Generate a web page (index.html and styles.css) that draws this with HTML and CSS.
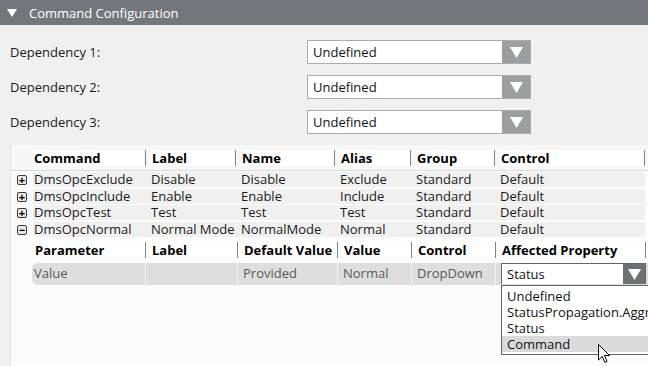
FILE: index.html
```html
<!DOCTYPE html>
<html lang="en">

<head>
    <meta charset="UTF-8">
    <title>Command Configuration</title>
    <link rel="stylesheet" href="styles.css">
</head>

<body>

    <!-- Section header -->
    <div class="section-bar">
        <svg class="collapse-icon" width="10" height="8" viewBox="0 0 10 8"><polygon points="0,0 10,0 5,8" fill="#fff"/></svg>
        <span>Command Configuration</span>
    </div>

    <div class="section-body">

        <!-- Dependencies -->
        <div class="dep-row">
            <label>Dependency 1:</label>
            <div class="select">
                <span class="select-value">Undefined</span>
                <span class="select-btn"><svg width="13" height="11" viewBox="0 0 13 11"><polygon points="0,0 13,0 6.5,11" fill="#fff"/></svg></span>
            </div>
        </div>
        <div class="dep-row">
            <label>Dependency 2:</label>
            <div class="select">
                <span class="select-value">Undefined</span>
                <span class="select-btn"><svg width="13" height="11" viewBox="0 0 13 11"><polygon points="0,0 13,0 6.5,11" fill="#fff"/></svg></span>
            </div>
        </div>
        <div class="dep-row">
            <label>Dependency 3:</label>
            <div class="select">
                <span class="select-value">Undefined</span>
                <span class="select-btn"><svg width="13" height="11" viewBox="0 0 13 11"><polygon points="0,0 13,0 6.5,11" fill="#fff"/></svg></span>
            </div>
        </div>

        <!-- Commands grid -->
        <div class="grid">
            <div class="grid-head">
                <div class="hcell blank"></div>
                <div class="hcell first"><span>Command</span></div>
                <div class="hcell"><span>Label</span></div>
                <div class="hcell"><span>Name</span></div>
                <div class="hcell"><span>Alias</span></div>
                <div class="hcell"><span>Group</span></div>
                <div class="hcell"><span>Control</span></div>
            </div>

            <div class="grid-row">
                <div class="expander"><span class="toggle">+</span></div>
                <div class="cell first">DmsOpcExclude</div>
                <div class="cell">Disable</div>
                <div class="cell">Disable</div>
                <div class="cell">Exclude</div>
                <div class="cell">Standard</div>
                <div class="cell">Default</div>
            </div>
            <div class="grid-row">
                <div class="expander"><span class="toggle">+</span></div>
                <div class="cell first">DmsOpcInclude</div>
                <div class="cell">Enable</div>
                <div class="cell">Enable</div>
                <div class="cell">Include</div>
                <div class="cell">Standard</div>
                <div class="cell">Default</div>
            </div>
            <div class="grid-row">
                <div class="expander"><span class="toggle">+</span></div>
                <div class="cell first">DmsOpcTest</div>
                <div class="cell">Test</div>
                <div class="cell">Test</div>
                <div class="cell">Test</div>
                <div class="cell">Standard</div>
                <div class="cell">Default</div>
            </div>
            <div class="grid-row">
                <div class="expander"><span class="toggle">&minus;</span></div>
                <div class="cell first">DmsOpcNormal</div>
                <div class="cell">Normal Mode</div>
                <div class="cell">NormalMode</div>
                <div class="cell">Normal</div>
                <div class="cell">Standard</div>
                <div class="cell">Default</div>
            </div>

            <!-- Parameters of DmsOpcNormal -->
            <div class="sub">
                <div class="sub-head">
                    <div class="hcell first"><span>Parameter</span></div>
                    <div class="hcell"><span>Label</span></div>
                    <div class="hcell"><span>Default Value</span></div>
                    <div class="hcell"><span>Value</span></div>
                    <div class="hcell"><span>Control</span></div>
                    <div class="hcell"><span>Affected Property</span></div>
                </div>
                <div class="sub-row">
                    <div class="pcell first">Value</div>
                    <div class="pcell"></div>
                    <div class="pcell">Provided</div>
                    <div class="pcell">Normal</div>
                    <div class="pcell">DropDown</div>
                    <div class="pcell drop-cell">
                        <div class="select dark">
                            <span class="select-value">Status</span>
                            <span class="select-btn"><svg width="13" height="11" viewBox="0 0 13 11"><polygon points="0,0 13,0 6.5,11" fill="#fff"/></svg></span>
                            <ul class="drop-list">
                                <li>Undefined</li>
                                <li>StatusPropagation.Aggregation</li>
                                <li>Status</li>
                                <li class="hover">Command</li>
                            </ul>
                        </div>
                    </div>
                </div>
            </div>
        </div>
    </div>

    <!-- Mouse pointer over the list -->
    <svg class="pointer" width="13" height="20" viewBox="0 0 13 20">
        <polygon points="0.5,0.5 0.5,16 4.2,12.4 6.8,18.5 9,17.5 6.5,11.5 11.5,11.5" fill="#fff" stroke="#000" stroke-width="1" stroke-linejoin="round"/>
    </svg>

</body>

</html>
```

FILE: styles.css
```css
* {
    box-sizing: border-box;
}

body {
    margin: 0;
    font-family: "Open Sans", "Noto Sans", sans-serif;
    font-size: 13px;
    color: #1a1a1a;
    background: #f0f0f0;
    height: 366px;
    overflow: hidden;
}

.section-bar {
    height: 25px;
    background: #73777b;
    color: #fff;
    display: flex;
    align-items: center;
    padding-left: 7px;
}

.collapse-icon {
    margin-right: 12px;
}

.section-body {
    padding-top: 15px;
}

/* dependency rows */
.dep-row {
    display: flex;
    align-items: center;
    height: 24px;
    margin-bottom: 11px;
    padding-left: 10px;
}

.dep-row label {
    width: 297px;
}

.select {
    position: relative;
    display: flex;
    width: 224px;
    height: 24px;
    background: #fff;
    border: 1px solid #acacac;
}

.select-value {
    flex: 1;
    padding-left: 5px;
    line-height: 22px;
    color: #111;
}

.select-btn {
    width: 28px;
    background: #9c9ea0;
    display: flex;
    align-items: center;
    justify-content: center;
}

/* grid */
.grid {
    margin-left: 10px;
    height: 221px;
    background: #fcfcfc;
    border-left: 1px solid #e4e4e4;
    position: relative;
}

.grid-head,
.grid-row {
    display: grid;
    grid-template-columns: 22px 113px 90px 99px 76px 84px 150px 1fr;
}

.grid-head {
    padding-top: 5px;
    height: 26px;
    border-bottom: 1px solid #dadada;
    background: #f7f7f7;
}

.hcell {
    height: 16px;
    border-right: 1px solid #858585;
    padding-left: 5px;
    font-weight: 700;
    color: #000;
    line-height: 16px;
}

.hcell span {
    display: block;
    height: 16px;
    background: #fff;
    padding-left: 1px;
    margin-right: 1px;
}

.hcell.first {
    padding-left: 0;
}

.hcell.blank {
    border-right: none;
}

.grid-row {
    height: 15px;
    margin-top: 1px;
    line-height: 15px;
}

.grid-row:nth-child(3),
.grid-row:nth-child(5) {
    margin-top: 2px;
}

.grid-row .cell {
    background: #f0f0f0;
    padding-left: 5px;
    white-space: nowrap;
}

.grid-row .cell.first {
    padding-left: 1px;
}

.expander {
    display: flex;
    align-items: center;
    padding-left: 6px;
}

.toggle {
    width: 10px;
    height: 10px;
    border: 1px solid #3a3a3a;
    border-radius: 2px;
    background: #e8e8e8;
    font-size: 11px;
    font-weight: 700;
    line-height: 7px;
    text-align: center;
    color: #000;
}

/* parameters */
.sub {
    margin-top: 2px;
}

.sub-head {
    display: grid;
    grid-template-columns: 23px 112px 92px 100px 74px 84px 150px;
    padding-top: 3px;
}

.sub-head::before {
    content: "";
}

.sub-row {
    display: grid;
    grid-template-columns: 114px 92px 100px 74px 84px 1fr;
    margin-top: 5px;
    margin-left: 21px;
    height: 22px;
    background: #dedede;
    border-radius: 6px 0 0 6px;
    line-height: 21px;
    color: #5a5a5a;
}

.pcell {
    border-right: 1px solid #f4f4f4;
    padding-left: 5px;
}

.pcell.first {
    padding-left: 2px;
}

.pcell.drop-cell {
    border-right: none;
    padding-left: 5px;
}

.select.dark {
    width: 145px;
    height: 21px;
    border-color: #666;
    border-bottom: none;
}

.select.dark .select-value {
    line-height: 20px;
    color: #111;
}

.select.dark .select-btn {
    width: 22px;
    background: #6d7074;
}

.drop-list {
    position: absolute;
    left: -1px;
    top: 21px;
    width: 160px;
    margin: 0;
    padding: 2px 0 2px 0;
    list-style: none;
    background: #fff;
    border: 1px solid #646464;
    color: #111;
    line-height: 16px;
    z-index: 2;
}

.drop-list li {
    height: 16px;
    padding-left: 5px;
    white-space: nowrap;
}

.drop-list li.hover {
    background: #dadada;
}

.pointer {
    position: absolute;
    left: 598px;
    top: 344px;
    z-index: 3;
}
```
